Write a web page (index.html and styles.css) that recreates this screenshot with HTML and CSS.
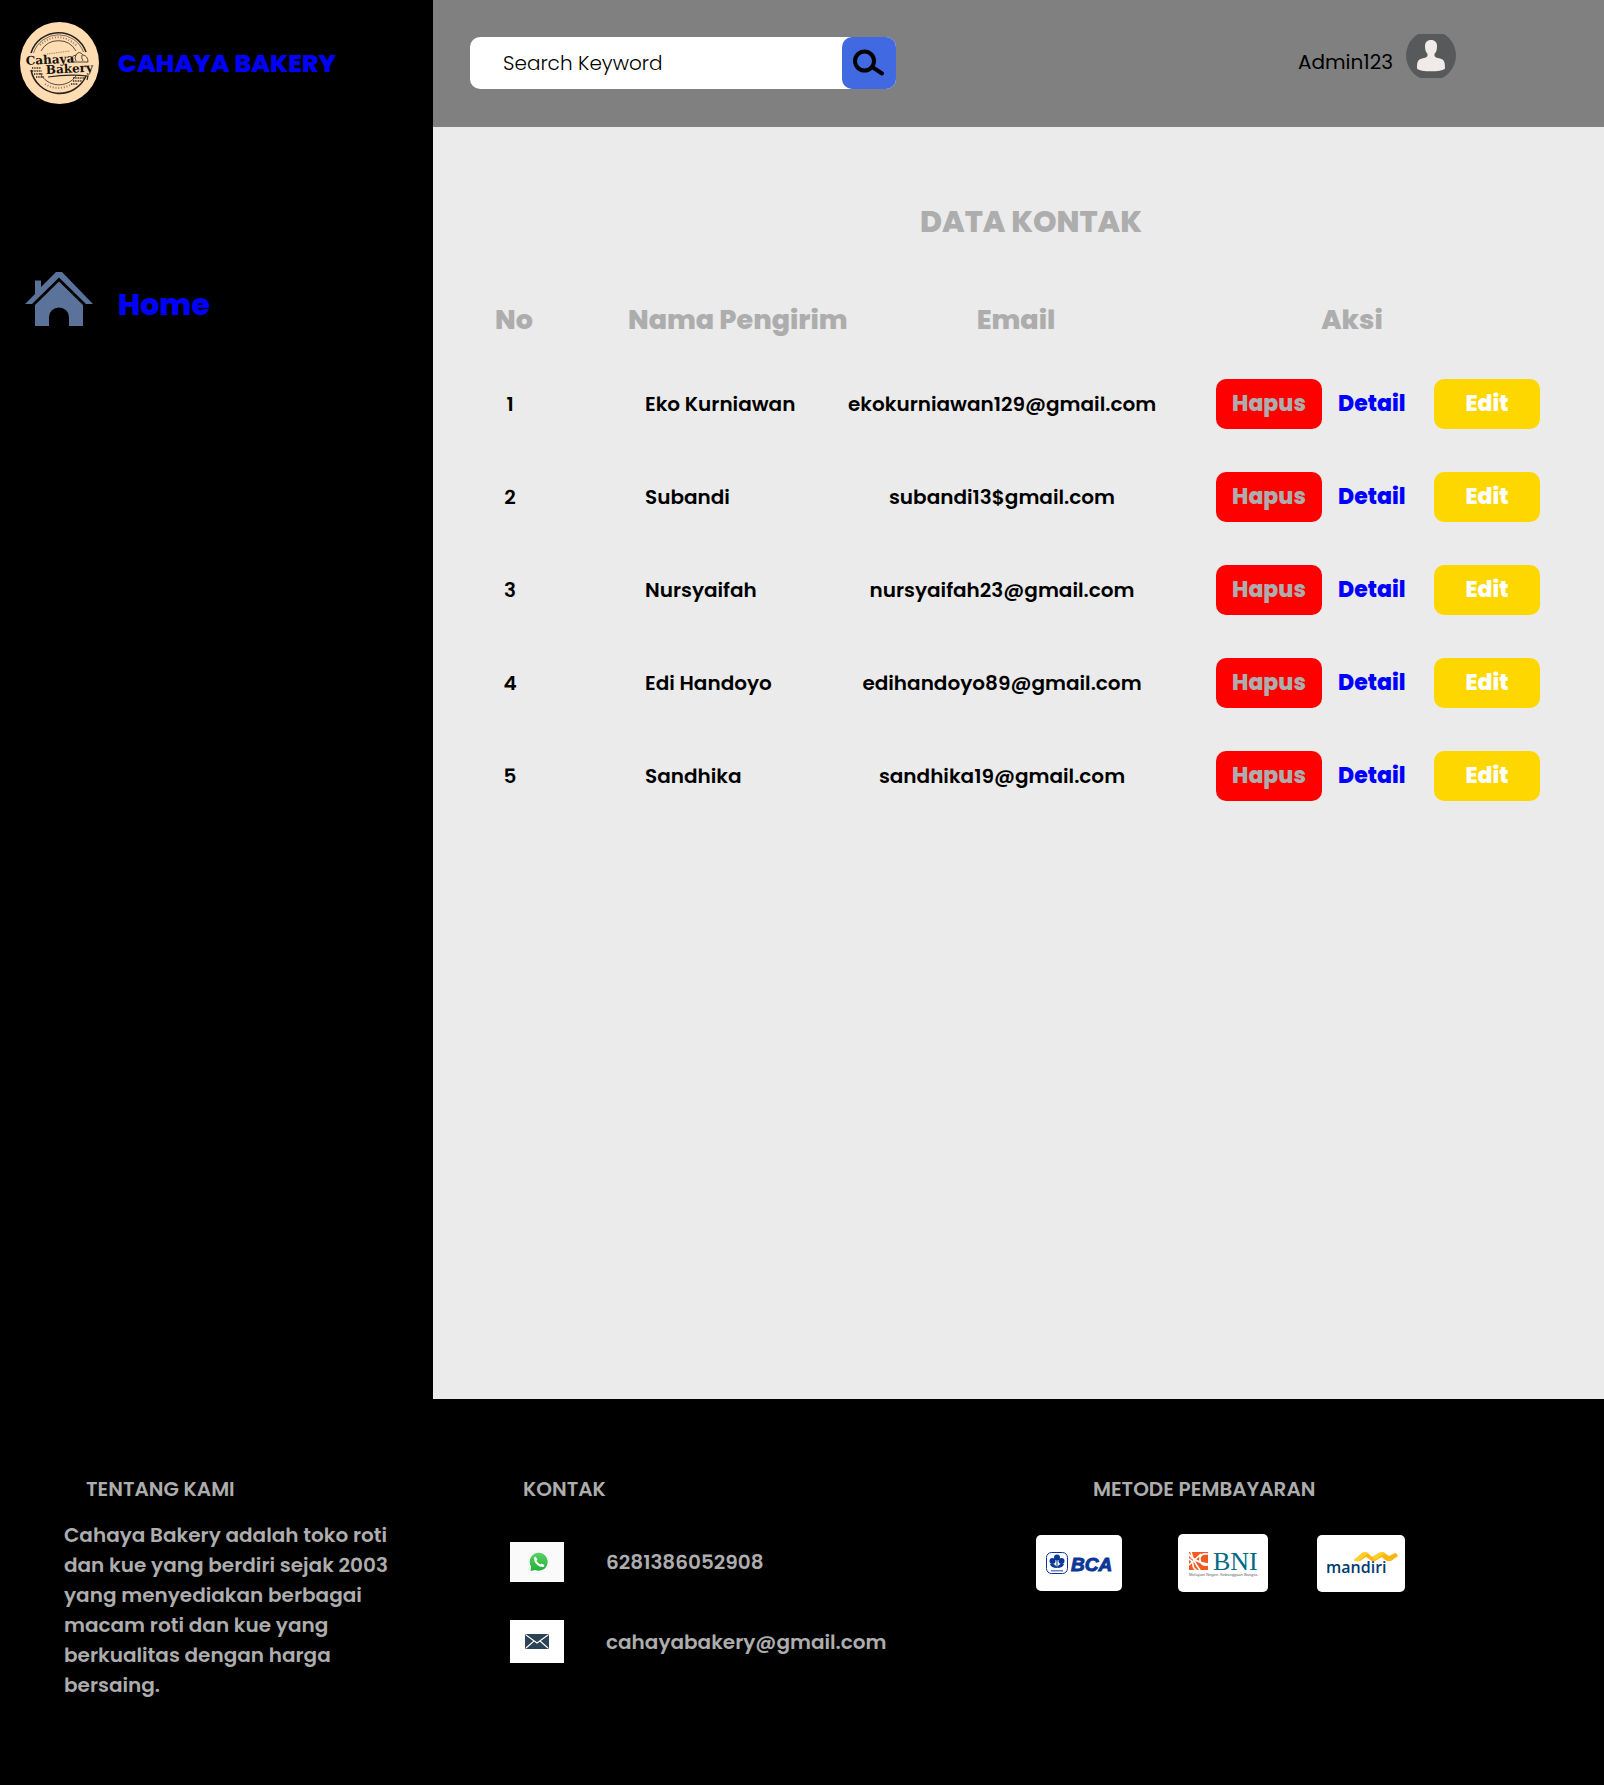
FILE: index.html
```html
<!DOCTYPE html>
<html lang="id">
<head>
  <meta charset="utf-8">
  <meta name="viewport" content="width=device-width, initial-scale=1">
  <title>Data Kontak - Cahaya Bakery</title>
  <link rel="stylesheet" href="styles.css">
</head>
<body>
  <div class="shell">
    <aside class="sidebar">
      <a class="brand" href="#">
        <svg class="brand-logo" viewBox="0 0 79 82" aria-hidden="true">
          <ellipse cx="39.500" cy="41" rx="39.500" ry="41" fill="#ffdcb2"/>
          <g fill="none" stroke="#2a241e">
            <path d="M11 31A29 29 0 0 1 66 30" stroke-width="1.600"/>
            <path d="M13.500 31A26.500 26.500 0 0 1 63.500 30" stroke-width=".6"/>
            <path d="M11 48A29 29 0 0 0 66 54" stroke-width="1.600"/>
            <path d="M21 29A20 20 0 0 1 56 29M20 51A21 21 0 0 0 56 54" stroke-width=".8"/>
            <path d="M12 46l9 0M12 49l10 0M14 52l9 0M16 55l8 0M53 56l11 0M53 59l9 0M51 62l7 0" stroke-width="1.400" stroke-dasharray="1 .7"/>
            <path d="M51 39q0-5 5-6q3-5 7 0q5 1 5 7M56 33q-2 3 0 6M62 33q-1 3 1 6M51 40h17" stroke-width=".8"/>
            <path d="M28 55q20-3 40-1l-1 4" stroke-width="1.200"/>
            <path d="M20 23Q39 7 57 24M25 62Q38 70 52 62" stroke-width="2" stroke-opacity=".5" stroke-dasharray="1 1.800"/>
            <path d="M27 32l23-3" stroke-opacity=".5" stroke-dasharray="1 .8"/>
          </g>
          <g class="brand-script">
            <text x="6" y="43" transform="rotate(-3 6 43)">Cahaya</text>
            <text x="26" y="52" transform="rotate(-3 26 52)">Bakery</text>
          </g>
        </svg>
        <span class="brand-name">CAHAYA BAKERY</span>
      </a>
      <nav>
        <a class="nav-link" href="#">
          <svg class="nav-icon" viewBox="0 0 68 54" aria-hidden="true">
            <path fill="#5b739b" d="M0 32L10 22V8.500H16V15L31 0H37L68 32H61L34 5.500L7 32Z"/>
            <path fill="#5b739b" d="M34 9.500L58 33V54H44V45A10 9.500 0 0 0 24 45V54H10V33Z"/>
          </svg>
          <span>Home</span>
        </a>
      </nav>
    </aside>

    <div class="workspace">
      <header class="topbar">
        <form class="search" role="search">
          <input class="search-input" type="search" aria-label="Search Keyword" placeholder="Search Keyword">
          <button class="search-button" type="button" aria-label="Search">
            <svg viewBox="0 0 54 52" width="54" height="52" aria-hidden="true">
              <g fill="none" stroke="#000" stroke-width="4" stroke-linecap="round">
                <circle cx="22.500" cy="24" r="9.500"/>
                <path d="M31 30.500L40 36.500"/>
              </g>
            </svg>
          </button>
        </form>
        <div class="user">
          <span class="user-name">Admin123</span>
          <svg viewBox="0 0 50 44" width="50" height="44" aria-hidden="true">
            <circle cx="25" cy="21.500" r="25" fill="#58595b"/>
            <path fill="#f0ebe8" d="M25 6C29 6 31 8.500 31 12C31 15 30.500 18 28.500 20C28 23 30 23.500 33 24.300C38 25.500 39 27 39 34.500C36 38.300 14 38.300 11 34.500C11 27 12 25.500 17 24.300C20 23.500 22 23 21.500 20C19.500 18 19 15 19 12C19 8.500 21 6 25 6Z"/>
          </svg>
        </div>
      </header>

      <main class="content">
        <h1 class="page-title">DATA KONTAK</h1>
        <table class="contacts">
          <thead>
            <tr>
              <th class="col-no" scope="col">No</th>
              <th class="col-name" scope="col">Nama Pengirim</th>
              <th class="col-email" scope="col">Email</th>
              <th class="col-actions" scope="col">Aksi</th>
            </tr>
          </thead>
          <tbody>
            <tr>
              <td class="col-no">1</td><td class="col-name">Eko Kurniawan</td><td class="col-email">ekokurniawan129@gmail.com</td>
              <td class="col-actions"><div class="actions"><button class="btn btn-delete" type="button">Hapus</button><a class="detail" href="#">Detail</a><button class="btn btn-edit" type="button">Edit</button></div></td>
            </tr>
            <tr>
              <td class="col-no">2</td><td class="col-name">Subandi</td><td class="col-email">subandi13$gmail.com</td>
              <td class="col-actions"><div class="actions"><button class="btn btn-delete" type="button">Hapus</button><a class="detail" href="#">Detail</a><button class="btn btn-edit" type="button">Edit</button></div></td>
            </tr>
            <tr>
              <td class="col-no">3</td><td class="col-name">Nursyaifah</td><td class="col-email">nursyaifah23@gmail.com</td>
              <td class="col-actions"><div class="actions"><button class="btn btn-delete" type="button">Hapus</button><a class="detail" href="#">Detail</a><button class="btn btn-edit" type="button">Edit</button></div></td>
            </tr>
            <tr>
              <td class="col-no">4</td><td class="col-name">Edi Handoyo</td><td class="col-email">edihandoyo89@gmail.com</td>
              <td class="col-actions"><div class="actions"><button class="btn btn-delete" type="button">Hapus</button><a class="detail" href="#">Detail</a><button class="btn btn-edit" type="button">Edit</button></div></td>
            </tr>
            <tr>
              <td class="col-no">5</td><td class="col-name">Sandhika</td><td class="col-email">sandhika19@gmail.com</td>
              <td class="col-actions"><div class="actions"><button class="btn btn-delete" type="button">Hapus</button><a class="detail" href="#">Detail</a><button class="btn btn-edit" type="button">Edit</button></div></td>
            </tr>
          </tbody>
        </table>
      </main>
    </div>
  </div>

  <footer class="footer">
    <section class="about">
      <h2>TENTANG KAMI</h2>
      <p>Cahaya Bakery adalah toko roti dan kue yang berdiri sejak 2003 yang menyediakan berbagai macam roti dan kue yang berkualitas dengan harga bersaing.</p>
    </section>
    <section class="reach">
      <h2>KONTAK</h2>
      <ul class="reach-list">
        <li>
          <svg viewBox="0 0 54 40" width="54" height="40" aria-hidden="true">
            <defs><linearGradient id="wa" x2="0" y2="1"><stop stop-color="#5bd066"/><stop offset="1" stop-color="#20b038"/></linearGradient></defs>
            <path fill="#fafafa" d="M0 0H54V40H0Z"/>
            <path fill="#fff" stroke="#e4e4e4" stroke-width=".5" d="M18.500 31L19.500 25A10.300 10.300 0 1 1 24 29.500Z"/>
            <path fill="url(#wa)" d="M20.500 29L21 24.500A9 9 0 1 1 25 28Z"/>
            <path fill="none" stroke="#fff" stroke-width="2" stroke-linecap="round" d="M25 16.500C25 20.500 29 24 33 24"/>
            <path fill="#fff" d="M24 16l1.500-1.500 2 3-1.500 1.500zM30 23.500l1.500-2 3 1.500-1 2z"/>
          </svg>
          <span>6281386052908</span>
        </li>
        <li>
          <svg viewBox="0 0 54 43" width="54" height="43" aria-hidden="true">
            <path fill="#fff" d="M0 0H54V43H0Z"/>
            <rect x="15" y="14" width="24" height="15" rx="1.500" fill="#2c4257"/>
            <path fill="none" stroke="#fff" stroke-width="1.100" d="M16 15L27 23L38 15M16 28L24 21M38 28L30 21"/>
          </svg>
          <span>cahayabakery@gmail.com</span>
        </li>
      </ul>
    </section>
    <section class="payment">
      <h2>METODE PEMBAYARAN</h2>
      <div class="banks">
        <svg viewBox="0 0 86 56" width="86" height="56" role="img" aria-label="BCA">
          <rect width="86" height="56" rx="5" fill="#fff"/>
          <rect x="10.500" y="17.500" width="21" height="21" rx="5" fill="#fff" stroke="#0b3796"/>
          <g fill="#0b3796">
            <circle cx="21" cy="22.500" r="3"/><ellipse cx="16.500" cy="26" rx="3" ry="3"/><ellipse cx="25.500" cy="26" rx="3" ry="3"/>
            <path d="M20.500 24h1v9h-1zM21 33q-6 0-7-4q5-1 7 4zM21 33q6 0 7-4q-5-1-7 4z"/>
            <path d="M15 35h12v1.500h-12z" opacity=".6"/>
          </g>
          <text class="bank-bca" x="35" y="36">BCA</text>
        </svg>
        <svg viewBox="0 0 90 58" width="90" height="58" role="img" aria-label="BNI">
          <rect width="90" height="58" rx="5" fill="#fff"/>
          <rect x="11" y="18" width="19" height="18" fill="#f15a23"/>
          <g fill="none" stroke="#fff" stroke-width="1.600">
            <path d="M10 19Q15 28 30 30M13 18Q15 27 22 36M11 31L23 20M30 20Q21 19 22 26Q23 32 30 31M11 25Q15 27 15 31T20 37"/>
          </g>
          <text class="bank-bni" x="35" y="36">BNI</text>
          <text class="bank-tagline" x="11" y="42">Melayani Negeri, Kebanggaan Bangsa</text>
        </svg>
        <svg viewBox="0 0 88 57" width="88" height="57" role="img" aria-label="mandiri">
          <rect width="88" height="57" rx="5" fill="#fff"/>
          <text class="bank-mandiri" x="9" y="38">mandiri</text>
          <path fill="#fdb515" d="M37 25L45 18Q49 16 52 19L55 22L62 18Q66 16 69 19L72 21L78 18Q80 18 81 21L74 26Q71 27 68 25L65 22L58 26Q55 27 52 24L49 22L43 26Q39 27 37 25Z"/>
          <path fill="#ffcf2d" d="M37 25L45 18Q49 16 51 18L42 26Q39 27 37 25ZM55 22L62 18Q66 16 68 18L58 25Z"/>
        </svg>
      </div>
    </section>
  </footer>
</body>
</html>
```
FILE: styles.css
```css
* {
  box-sizing: border-box;
}

body {
  margin: 0;
  min-height: 100vh;
  display: flex;
  flex-direction: column;
  background: #000;
  color: #000;
  font-family: "Poppins", "Inter", sans-serif;
  font-size: 20px;
  line-height: 30px;
}

h1,
h2,
p,
ul {
  margin: 0;
  padding: 0;
}

a {
  color: #00f;
  text-decoration: none;
}

button,
input {
  border: 0;
  font: inherit;
}

svg {
  display: block;
  flex: none;
}

.shell {
  flex: 1;
  display: grid;
  grid-template-columns: 433px minmax(0, 1fr);
}

/* Sidebar */

.sidebar {
  background: #000;
}

.brand {
  display: flex;
  align-items: center;
  gap: 19px;
  padding: 22px 20px;
  font-size: 25px;
  font-weight: 800;
}

.brand-name {
  padding-top: 2px;
}

.brand-logo {
  width: 79px;
  height: 82px;
}

.brand-script {
  font-family: "DejaVu Serif", serif;
  font-size: 12px;
  font-weight: 700;
  fill: #15110d;
}

.nav-link {
  display: flex;
  align-items: flex-end;
  gap: 25px;
  margin-top: 146px;
  padding-left: 25px;
  font-size: 30px;
  font-weight: 800;
  line-height: 42px;
}

.nav-icon {
  width: 68px;
  height: 54px;
}

/* Top bar */

.workspace {
  display: flex;
  flex-direction: column;
  background: #ebebeb;
}

.topbar {
  display: flex;
  align-items: center;
  justify-content: space-between;
  height: 127px;
  padding: 0 148px 2px 37px;
  background: #808080;
}

.search {
  display: flex;
  width: 426px;
  height: 52px;
  background: #fff;
  border-radius: 10px;
}

.search-input {
  flex: 1;
  min-width: 0;
  padding: 0 33px;
  background: transparent;
  font-weight: 300;
  outline: 0;
}

.search-input::placeholder {
  color: #000;
  opacity: 1;
}

.search-button {
  width: 54px;
  padding: 0;
  background: #4169e1;
  border-radius: 10px;
}

.user {
  display: flex;
  align-items: flex-end;
  gap: 13px;
  padding-bottom: 14px;
  line-height: 32px;
}

/* Contact table */

.content {
  padding: 75px 64px 74px 37px;
}

.page-title {
  padding-left: 52px;
  margin-bottom: 41px;
  color: #adadad;
  font-size: 30px;
  font-weight: 800;
  line-height: 40px;
  text-align: center;
}

.contacts {
  width: 100%;
  table-layout: fixed;
  border-collapse: collapse;
  font-weight: 600;
}

.contacts th {
  height: 74px;
  padding: 0;
  color: #adadad;
  font-size: 27px;
  font-weight: 800;
  white-space: nowrap;
}

.contacts td {
  height: 93px;
  padding: 0;
}

.contacts .col-no {
  width: 158px;
  padding-right: 78px;
  text-align: center;
}

.contacts th.col-no {
  padding-right: 70px;
}

.contacts .col-name {
  text-align: left;
}

.contacts td.col-name {
  padding-left: 17px;
}

.contacts .col-email {
  width: 308px;
  text-align: center;
}

.contacts th.col-email {
  padding-left: 28px;
}

.contacts .col-actions {
  width: 384px;
  padding-left: 60px;
}

.contacts th.col-actions {
  padding-right: 52px;
}

.actions {
  display: grid;
  grid-template-columns: 106px 1fr 106px;
  align-items: center;
  font-size: 22px;
  font-weight: 800;
}

.btn {
  height: 50px;
  padding: 0;
  border-radius: 10px;
}

.btn-delete {
  background: #f00;
  color: #adadad;
}

.btn-edit {
  background: gold;
  color: #fff;
}

.detail {
  padding-left: 16px;
}

/* Footer */

.footer {
  display: grid;
  grid-template-columns: 446px 526px minmax(0, 1fr);
  padding: 75px 64px 85px;
  background: #000;
  color: #adadad;
  font-weight: 600;
}

.footer h2 {
  font-size: 20px;
  font-weight: 600;
}

.about h2 {
  padding-left: 22px;
}

.about p {
  max-width: 330px;
  margin-top: 16px;
}

.reach h2 {
  padding-left: 13px;
}

.reach-list {
  display: grid;
  gap: 38px;
  margin-top: 38px;
  list-style: none;
}

.reach-list li {
  display: flex;
  align-items: center;
  gap: 42px;
}

.payment h2 {
  padding-left: 57px;
}

.banks {
  display: grid;
  grid-template-columns: 142px 139px 88px;
  align-items: center;
  margin-top: 30px;
}

.bank-bca {
  font: italic 700 19px "Liberation Sans", sans-serif;
  fill: #0b3796;
  stroke: #0b3796;
}

.bank-bni {
  font: 400 26px "Liberation Serif", serif;
  fill: #006c84;
}

.bank-tagline {
  font: 400 4px "Liberation Sans", sans-serif;
  fill: #666;
}

.bank-mandiri {
  font: 600 16px "Open Sans", sans-serif;
  fill: #003a70;
}
```
